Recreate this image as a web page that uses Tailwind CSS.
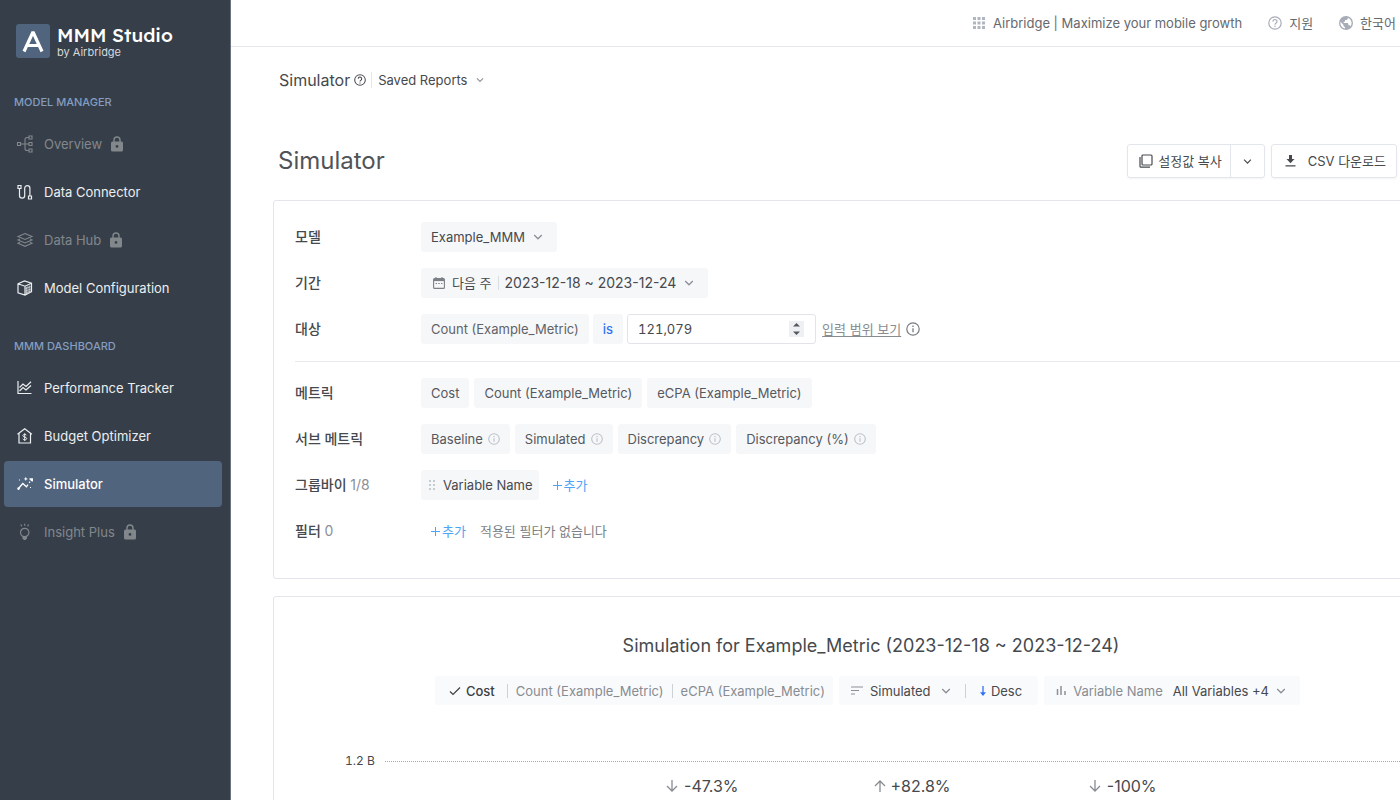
<!DOCTYPE html>
<html lang="ko">
<head>
  <meta charset="UTF-8" />
  <meta name="viewport" content="width=device-width, initial-scale=1.0"/>
  <title>MMM Studio - Simulator</title>
  <script src="https://cdn.jsdelivr.net/npm/@tailwindcss/browser@4"></script>
</head>
<body class="bg-white text-[#46494d] text-[13px] leading-5 font-['Inter','Noto_Sans_CJK_KR',sans-serif]">

  <!-- shared icons -->
  <svg class="hidden">
    <symbol id="chevron" viewBox="0 0 10 10"><path d="M1.2 3l3.8 3.8L8.8 3" fill="none" stroke="currentColor" stroke-width="1.3"/></symbol>
    <symbol id="info" viewBox="0 0 14 14"><circle cx="7" cy="7" r="6.2" fill="none" stroke="currentColor" stroke-width="1.2"/><path d="M7 6.2v4M7 3.6v1.3" stroke="currentColor" stroke-width="1.3"/></symbol>
    <symbol id="help" viewBox="0 0 14 14"><circle cx="7" cy="7" r="6.2" fill="none" stroke="currentColor" stroke-width="1.2"/><path d="M5 5.6a2 2 0 1 1 3.2 1.5C7.4 7.6 7 8 7 8.8M7 9.8v1.2" fill="none" stroke="currentColor" stroke-width="1.2"/></symbol>
    <symbol id="lock" viewBox="0 0 12 16"><path d="M3 6V4a3 3 0 0 1 6 0v2" fill="none" stroke="currentColor" stroke-width="1.4"/><path fill-rule="evenodd" d="M1.5 5.5h9a1.5 1.5 0 0 1 1.5 1.5v7a1.5 1.5 0 0 1-1.5 1.5h-9A1.5 1.5 0 0 1 0 14V7a1.5 1.5 0 0 1 1.5-1.5zM6 9a1.4 1.4 0 1 0 0 2.8A1.4 1.4 0 0 0 6 9z" fill="currentColor"/></symbol>
    <symbol id="arrow-down" viewBox="0 0 12 14"><path d="M6 1v11M1 7l5 5 5-5" fill="none" stroke="currentColor" stroke-width="1.3"/></symbol>
  </svg>

  <div class="flex h-screen overflow-hidden">

    <aside class="w-[231px] shrink-0 bg-[#363f49] border-r border-[#6b747d] px-1">
      <div class="flex items-center gap-[7px] pl-3 pt-6 h-[58px]">
        <svg class="w-[34px] h-[34px] shrink-0" viewBox="0 0 34 34">
          <rect width="34" height="34" rx="3" fill="#51647d"/>
          <path d="M8 27.5L17 8l9 19.5M11.5 21.5h11" fill="none" stroke="#fff" stroke-width="3.2" stroke-linejoin="bevel"/>
        </svg>
        <div class="flex flex-col">
          <p class="text-[19px] leading-[22px] font-medium text-white whitespace-nowrap font-['Lexend','Inter',sans-serif]">MMM Studio</p>
          <p class="text-[11px] leading-3 text-[#d5d9de]">by Airbridge</p>
        </div>
      </div>

      <h2 class="mt-9 pl-[10px] text-[11px] leading-4 font-medium text-[#849dc0]">MODEL MANAGER</h2>
      <nav class="mt-[11px] flex flex-col gap-[2px] text-[#eceef0]">
        <a href="#" class="flex items-center h-[46px] pl-3 rounded text-[#82878c]">
          <svg class="w-[18px] h-[18px] mr-[10px]" viewBox="0 0 18 18" fill="none" stroke="currentColor" stroke-width="1.1"><path d="M1.5 7.5h3v3h-3zM13 1h3v3h-3zM13 7.5h3v3h-3zM13 14h3v3h-3zM4.5 9H13M13 2.500h-2A2 2 0 0 0 9 4.500v9a2 2 0 0 0 2 2h2"/></svg>
          Overview
          <svg class="w-3 h-4 ml-[9px]"><use href="#lock"/></svg>
        </a>
        <a href="#" class="flex items-center h-[46px] pl-3 rounded">
          <svg class="w-[18px] h-[18px] mr-[10px]" viewBox="0 0 18 18" fill="none" stroke="currentColor" stroke-width="1.2"><path d="M2 2.500h3v3H2zM12.500 13h3v3h-3zM3.500 5.500v7a2.600 2.600 0 0 0 5.200 0V5.200a2.600 2.600 0 0 1 5.200 0V13"/></svg>
          Data Connector
        </a>
        <a href="#" class="flex items-center h-[46px] pl-3 rounded text-[#82878c]">
          <svg class="w-[18px] h-[18px] mr-[10px]" viewBox="0 0 18 18" fill="none" stroke="currentColor" stroke-width="1.1"><path d="M9 2.500l7 3-7 3-7-3zM4 8l-2 1 7 3 7-3-2-1M4 11.300l-2 1 7 3 7-3-2-1"/></svg>
          Data Hub
          <svg class="w-3 h-4 ml-[9px]"><use href="#lock"/></svg>
        </a>
        <a href="#" class="flex items-center h-[46px] pl-3 rounded">
          <svg class="w-[18px] h-[18px] mr-[10px]" viewBox="0 0 18 18" fill="none" stroke="currentColor" stroke-width="1.2"><path d="M2 4.800L8.500 2l7 2.300v8.400L9 16l-7-2.300zM2 4.800l7 2.400 6.500-2.900M9 7.200V16"/><path d="M10.500 8v7M12 7v7M13.700 6.500v7M9.500 9.500l5.500-2M9.500 12l5.500-2M9.500 14l5.500-2" stroke-width=".6"/></svg>
          Model Configuration
        </a>
      </nav>

      <h2 class="mt-[27px] pl-[10px] text-[11px] leading-4 font-medium text-[#849dc0]">MMM DASHBOARD</h2>
      <nav class="mt-[11px] flex flex-col gap-[2px] text-[#eceef0]">
        <a href="#" class="flex items-center h-[46px] pl-3 rounded">
          <svg class="w-[18px] h-[18px] mr-[10px]" viewBox="0 0 18 18" fill="none" stroke="currentColor" stroke-width="1.2"><path d="M2 2v12.500h13.500M3.500 8.500L7 5l3 2.500L15 2.800M3.500 12L7 8.500l3 2.500 5-4.500"/></svg>
          Performance Tracker
        </a>
        <a href="#" class="flex items-center h-[46px] pl-3 rounded">
          <svg class="w-[18px] h-[18px] mr-[10px]" viewBox="0 0 18 18" fill="none" stroke="currentColor" stroke-width="1.2"><path d="M1.5 7.200L8.700 1.800l7.200 5.400M3 6.500V16h11.500V6.500"/><path d="M10.600 8.300c-.3-.7-1-1-1.900-1-1 0-1.800.5-1.800 1.400 0 2 3.800.8 3.800 2.800 0 .9-.9 1.400-1.900 1.400s-1.800-.4-2-1.200M8.700 6.300v7.600" stroke-width="1"/></svg>
          Budget Optimizer
        </a>
        <a href="#" class="flex items-center h-[46px] pl-3 mr-1 rounded bg-[#51647d] font-medium text-white">
          <svg class="w-[18px] h-[18px] mr-[10px]" viewBox="0 0 18 18" fill="none" stroke="currentColor" stroke-width="1.3"><path d="M2.500 13.500l4.300-5 3.600 3.300 1.600-2.200M13.200 7.800l.8-1.100M14.800 5.600l1.200-1.600M13.500 4h2.800v2.600"/><path d="M9.800 1.800l.6 1.500 1.500.6-1.500.6-.6 1.500-.6-1.500-1.500-.6 1.500-.6zM2.500 12.300a1.300 1.300 0 1 0 .1 0zM3 4.500h1v1H3zM14 12h1v1h-1z" fill="currentColor" stroke="none"/></svg>
          Simulator
        </a>
        <a href="#" class="flex items-center h-[46px] pl-3 rounded text-[#82878c]">
          <svg class="w-[18px] h-[18px] mr-[10px]" viewBox="0 0 18 18" fill="none" stroke="currentColor" stroke-width="1.2"><circle cx="8.7" cy="9.500" r="4.200"/><path d="M8.700 .8v2M4.800 1.500l1 1.700M12.600 1.500l-1 1.700"/><path d="M6.500 13.500h4.400v1.800L9.600 17H7.800l-1.300-1.700z" fill="currentColor" stroke="none"/></svg>
          Insight Plus
          <svg class="w-3 h-4 ml-[9px]"><use href="#lock"/></svg>
        </a>
      </nav>
    </aside>

    <main class="flex-1 min-w-0 overflow-hidden">
      <header class="flex items-center justify-end h-[47px] pr-1 pb-px border-b border-[#e6e7ee] text-[#65696e] whitespace-nowrap">
        <button class="flex items-center">
          <svg class="w-3 h-3 mr-2" viewBox="0 0 12 12" fill="#b0b5bf"><path d="M0 0h3v3H0zM4.500 0h3v3h-3zM9 0h3v3H9zM0 4.500h3v3H0zM4.500 4.500h3v3h-3zM9 4.500h3v3H9zM0 9h3v3H0zM4.500 9h3v3h-3zM9 9h3v3H9z"/></svg>
          Airbridge | Maximize your mobile growth
        </button>
        <a href="#" class="flex items-center ml-[26px]">
          <svg class="w-[14px] h-[14px] mr-[7px] text-[#a7acb6]"><use href="#help"/></svg>
          지원
        </a>
        <button class="flex items-center ml-[26px]">
          <svg class="w-[14px] h-[14px] mr-[7px]" viewBox="0 0 14 14"><circle cx="7" cy="7" r="7" fill="#a7acb6"/><path d="M1.500 5.800L4.500 9v1l1.500 1.300v1.300A5.700 5.700 0 0 1 1.500 5.800zM8.800 1.800v1.100L7.600 4H6v1.500L4.700 6v1h4.200l.7 2.200h1l1 1A5.600 5.600 0 0 0 8.800 1.800z" fill="#fff"/></svg>
          한국어
        </button>
      </header>

      <div class="pl-[42px]">
        <div class="flex items-center h-6 mt-[21px] pl-[6px]">
          <span class="text-[16px]">Simulator</span>
          <svg class="w-3 h-3 ml-1"><use href="#help"/></svg>
          <span class="w-px h-4 ml-[5px] mr-[6px] bg-[#e3e5ea]"></span>
          <div class="relative">
            <select aria-label="Saved Reports" class="appearance-none pr-4 leading-5">
              <option>Saved Reports</option>
            </select>
            <svg class="absolute right-0 top-[6px] w-2 h-2 text-[#8c9096] pointer-events-none"><use href="#chevron"/></svg>
          </div>
        </div>

        <div class="flex items-center justify-between h-[34px] mt-[52px] pl-[5px] pr-[3px]">
          <h1 class="text-[24px] leading-8 text-[#505358]">Simulator</h1>
          <div class="flex gap-[6px] text-[#46494d]">
            <div class="flex h-[34px] border border-[#e3e6ec] rounded-[3px] shadow-xs">
              <button class="flex items-center pl-[10px] pr-2">
                <svg class="w-4 h-4 mr-1" viewBox="0 0 16 16" fill="none" stroke="currentColor" stroke-width="1.2"><rect x="4" y="2" width="10" height="10" rx="1"/><path d="M2 4v9.200a1 1 0 0 0 1 1h9"/></svg>
                설정값 복사
              </button>
              <button aria-label="더보기" class="flex items-center px-3 border-l border-[#e3e6ec]">
                <svg class="w-[9px] h-[9px]"><use href="#chevron"/></svg>
              </button>
            </div>
            <button class="flex items-center h-[34px] pl-[13px] pr-[10px] border border-[#e3e6ec] rounded-[3px] shadow-xs">
              <svg class="w-[11px] h-3 mr-3" viewBox="0 0 11 12" fill="currentColor"><path d="M4 0h3v4h2.500L5.500 8.300 1.500 4H4zM.5 10.200h10v1.300H.5z"/></svg>
              CSV 다운로드
            </button>
          </div>
        </div>

        <!-- report settings -->
        <section class="mt-[22px] -mr-[69px] pl-[21px] pt-[21px] pb-8 border border-[#e3e4ec] rounded-[3px]">
          <div class="flex flex-col gap-4">
            <div class="flex items-center h-[30px]">
              <label for="model" class="w-[126px] text-[14px] font-medium">모델</label>
              <div class="relative">
                <select id="model" class="appearance-none h-[30px] pl-[10px] pr-8 rounded-[3px] bg-[#f6f7f9]">
                  <option>Example_MMM</option>
                </select>
                <svg class="absolute right-[14px] top-[10px] w-[10px] h-[10px] text-[#8c9096] pointer-events-none"><use href="#chevron"/></svg>
              </div>
            </div>
            <div class="flex items-center h-[30px]">
              <span class="w-[126px] text-[14px] font-medium">기간</span>
              <button class="flex items-center h-[30px] pl-3 pr-[14px] rounded-[3px] bg-[#f6f7f9]">
                <svg class="w-3 h-3 mr-[7px]" viewBox="0 0 12 12" fill="none" stroke="#7b7f86" stroke-width="1.1"><rect x=".6" y="1.6" width="10.8" height="9.8" rx="1"/><path d="M.6 3h10.800" stroke-width="2.2"/><path d="M3 0v2M9 0v2"/><path d="M2.600 6.500h1.400M5.300 6.500h1.400M8 6.500h1.400"/></svg>
                다음 주
                <span class="w-px h-[14px] mx-[6px] bg-[#d9dce1]"></span>
                <span class="text-[14px]">2023-12-18 ~ 2023-12-24</span>
                <svg class="w-[10px] h-[10px] ml-2 text-[#8c9096]"><use href="#chevron"/></svg>
              </button>
            </div>
            <div class="flex items-center h-[30px]">
              <label for="target" class="w-[126px] text-[14px] font-medium">대상</label>
              <button class="h-[30px] px-[10px] rounded-[3px] bg-[#f6f7f9] text-[#5f6368]">Count (Example_Metric)</button>
              <button class="h-[30px] px-[10px] ml-1 rounded-[3px] bg-[#f6f7f9] text-[#2f74f5] font-medium">is</button>
              <div class="relative ml-1">
                <input id="target" type="text" value="121,079" class="w-[189px] h-[30px] px-[10px] border border-[#e3e4ea] rounded-[3px] tabular-nums"/>
                <button aria-label="값 조정" class="absolute right-3 top-[7px] w-[15px] h-4 bg-[#eef0f4]">
                  <svg class="w-[15px] h-4" viewBox="0 0 15 16" fill="#55595e"><path d="M4 5.500L7.500 2 11 5.500zM4 10.500L7.500 14 11 10.500z"/></svg>
                </button>
              </div>
              <a href="#" class="ml-[6px] text-[#888c92] underline underline-offset-2">입력 범위 보기</a>
              <svg class="w-[14px] h-[14px] ml-[5px] text-[#777b81]"><use href="#info"/></svg>
            </div>
          </div>

          <hr class="mt-[17px] mb-4 border-[#e9eaee]"/>

          <div class="flex flex-col gap-4">
            <div class="flex items-center h-[30px]">
              <span class="w-[126px] text-[14px] font-medium">메트릭</span>
              <div class="flex gap-[5px] text-[#55595e]">
                <button class="h-[30px] px-[10px] rounded-[3px] bg-[#f6f7f9]">Cost</button>
                <button class="h-[30px] px-[10px] rounded-[3px] bg-[#f6f7f9]">Count (Example_Metric)</button>
                <button class="h-[30px] px-[10px] rounded-[3px] bg-[#f6f7f9]">eCPA (Example_Metric)</button>
              </div>
            </div>
            <div class="flex items-center h-[30px]">
              <span class="w-[126px] text-[14px] font-medium">서브 메트릭</span>
              <div class="flex gap-[5px] text-[#55595e]">
                <button class="flex items-center gap-[5px] h-[30px] px-[10px] rounded-[3px] bg-[#f6f7f9]">Baseline <svg class="w-3 h-3 text-[#b9bec7]"><use href="#info"/></svg></button>
                <button class="flex items-center gap-[5px] h-[30px] px-[10px] rounded-[3px] bg-[#f6f7f9]">Simulated <svg class="w-3 h-3 text-[#b9bec7]"><use href="#info"/></svg></button>
                <button class="flex items-center gap-[5px] h-[30px] px-[10px] rounded-[3px] bg-[#f6f7f9]">Discrepancy <svg class="w-3 h-3 text-[#b9bec7]"><use href="#info"/></svg></button>
                <button class="flex items-center gap-[5px] h-[30px] px-[10px] rounded-[3px] bg-[#f6f7f9]">Discrepancy (%) <svg class="w-3 h-3 text-[#b9bec7]"><use href="#info"/></svg></button>
              </div>
            </div>
            <div class="flex items-center h-[30px]">
              <span class="w-[126px] text-[14px] font-medium">그룹바이 <span class="font-normal text-[#8c9096]">1/8</span></span>
              <button class="flex items-center h-[30px] pl-[7px] pr-[6px] rounded-[3px] bg-[#f6f7f9]">
                <svg class="w-2 h-[10px] mr-[7px]" viewBox="0 0 8 10" fill="#c6cad1"><path d="M1 0h2v2H1zM5 0h2v2H5zM1 4h2v2H1zM5 4h2v2H5zM1 8h2v2H1zM5 8h2v2H5z"/></svg>
                Variable Name
              </button>
              <button class="flex items-center gap-[2px] ml-[14px] text-[#4ea5f5]"><svg class="w-[9px] h-[9px]" viewBox="0 0 9 9"><path d="M4.500 0v9M0 4.500h9" stroke="currentColor"/></svg>추가</button>
            </div>
            <div class="flex items-center h-[30px]">
              <span class="w-[126px] text-[14px] font-medium">필터 <span class="font-normal text-[#8c9096]">0</span></span>
              <button class="flex items-center gap-[2px] ml-[10px] text-[#4ea5f5]"><svg class="w-[9px] h-[9px]" viewBox="0 0 9 9"><path d="M4.500 0v9M0 4.500h9" stroke="currentColor"/></svg>추가</button>
              <span class="ml-[14px] text-[#7b7f86]">적용된 필터가 없습니다</span>
            </div>
          </div>
        </section>

        <!-- simulation chart -->
        <section class="mt-[17px] -mr-[69px] pt-9 border border-[#e3e4ec] rounded-[3px]">
          <h2 class="text-center text-[18px] leading-[26px]">Simulation for Example_Metric (2023-12-18 ~ 2023-12-24)</h2>
          <div class="flex justify-center gap-[6px] mt-[17px] pr-[7px]">
            <div class="flex items-center h-[29px] pl-[14px] pr-2 rounded-[3px] bg-[#f9fafc] text-[#888c92]">
              <button class="flex items-center text-[#3c3f43] font-medium">
                <svg class="w-3 h-3 mr-[5px]" viewBox="0 0 12 12"><path d="M1 6.500l3 3L11 2.500" fill="none" stroke="currentColor" stroke-width="1.2"/></svg>
                Cost
              </button>
              <span class="w-px h-[14px] ml-3 mr-2 bg-[#cdd0d5]"></span>
              <button>Count (Example_Metric)</button>
              <span class="w-px h-[14px] mx-2 bg-[#cdd0d5]"></span>
              <button>eCPA (Example_Metric)</button>
            </div>
            <div class="flex items-center h-[29px] pl-3 pr-4 rounded-[3px] bg-[#f9fafc]">
              <svg class="w-3 h-[9px] mr-[7px] text-[#8c9096]" viewBox="0 0 12 9"><path d="M0 1h12M0 4.500h8M0 8h4" stroke="currentColor" stroke-width="1.2"/></svg>
              <div class="relative">
                <select aria-label="정렬 기준" class="appearance-none pr-5 leading-5">
                  <option>Simulated</option>
                </select>
                <svg class="absolute right-0 top-[5px] w-[10px] h-[10px] text-[#8c9096] pointer-events-none"><use href="#chevron"/></svg>
              </div>
              <span class="w-px h-[14px] ml-[14px] mr-[13px] bg-[#cdd0d5]"></span>
              <button class="flex items-center">
                <svg class="w-2 h-[10px] mr-1 text-[#2f74f5]" viewBox="0 0 8 10"><path d="M4 0v7" stroke="currentColor" stroke-width="1.3"/><path d="M1 6.300h6L4 10z" fill="currentColor"/></svg>
                Desc
              </button>
            </div>
            <button class="flex items-center h-[29px] pl-3 pr-[14px] rounded-[3px] bg-[#f9fafc]">
              <svg class="w-[11px] h-[9px] mr-[6px]" viewBox="0 0 11 9"><path d="M1.500 3v6M5 0v9M9 5v4" stroke="#8c9096" stroke-width="1.5"/></svg>
              <span class="mr-[10px] text-[#888c92]">Variable Name</span>
              All Variables +4
              <svg class="w-[10px] h-[10px] ml-[7px] text-[#8c9096]"><use href="#chevron"/></svg>
            </button>
          </div>

          <div class="mt-[46px] pl-[71px] pr-[22px]">
            <div class="flex items-center gap-[10px] text-[12px] tabular-nums">
              1.2 B
              <span class="flex-1 border-t border-dotted border-[#a5a8ac]"></span>
            </div>
            <div class="grid grid-cols-5 mt-[5px] ml-[42px] mr-2 text-[16px]">
              <span></span>
              <span class="flex items-center justify-center gap-[6px]"><svg class="w-3 h-[14px] text-[#888c92]"><use href="#arrow-down"/></svg>-47.3%</span>
              <span class="flex items-center justify-center gap-1"><svg class="w-3 h-[14px] rotate-180 text-[#888c92]"><use href="#arrow-down"/></svg>+82.8%</span>
              <span class="flex items-center justify-center gap-[6px]"><svg class="w-3 h-[14px] text-[#888c92]"><use href="#arrow-down"/></svg>-100%</span>
              <span></span>
            </div>
            <div class="h-80"></div>
          </div>
        </section>
      </div>
    </main>
  </div>

</body>
</html>
